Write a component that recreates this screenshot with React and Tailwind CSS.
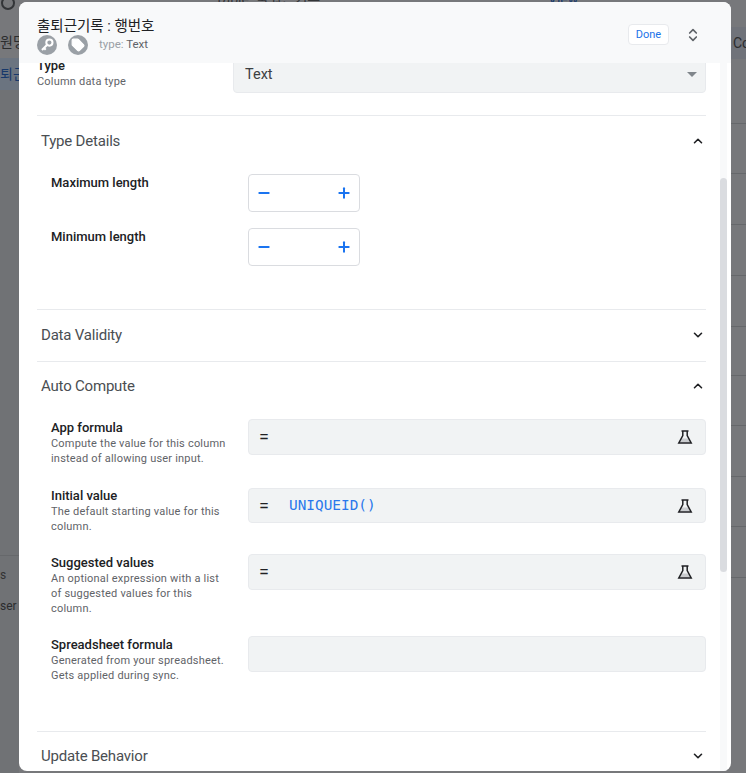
import React from 'react';
import { ChevronUp, ChevronDown, ChevronsUpDown, Minus, Plus, Tag } from 'lucide-react';

const sans = "font-['Roboto','Noto_Sans_CJK_KR',sans-serif]";
const bgLines = [123, 173, 224, 275, 326, 375, 425, 476, 526, 577];

const KeyIcon = () => (
  <svg width="14" height="14" viewBox="0 0 14 14" fill="none">
    <circle cx="9.4" cy="4.6" r="3.1" stroke="white" strokeWidth="2" />
    <path d="M7.2 6.8 2 12M4 10l1.7 1.7" stroke="white" strokeWidth="2.1" />
  </svg>
);

const Flask = () => (
  <svg width="16" height="16" viewBox="0 0 16 16" fill="none" className="text-[#202124]">
    <path d="M4.2 9.5h7.6l2 4H2.2z" fill="#c9cbce" />
    <path d="M4.5 2h7M5.8 2v4.6L1.8 14h12.4l-4-7.4V2" stroke="currentColor" strokeWidth="1.5" />
  </svg>
);

const SectionHeader = ({ title, open }) => (
  <div className="flex items-center justify-between pl-1 pr-px">
    <span className="text-[15px] tracking-[-0.2px] leading-5 text-[#4a4e52]">{title}</span>
    {open ? <ChevronUp size={14} strokeWidth={2.75} className="text-[#202124]" /> : <ChevronDown size={14} strokeWidth={2.75} className="text-[#202124]" />}
  </div>
);

const Stepper = () => (
  <div className="w-[112px] h-[38px] rounded border border-[#dadce0] flex items-center justify-between px-[7px] text-[#1b74f0]">
    <Minus size={16} strokeWidth={3} />
    <Plus size={16} strokeWidth={3} />
  </div>
);

const Label = ({ children }) => (
  <div className="text-[13px] leading-4 font-medium text-[#202124]">{children}</div>
);

const FormulaRow = ({ label, lines, value, h = 'h-[68px]', box = 'h-[36px] -mt-px' }) => (
  <div className={`flex ${h}`}>
    <div className="w-[197px] shrink-0">
      <Label>{label}</Label>
      {lines.map((l) => (
        <div key={l} className="text-[11px] leading-[15px] text-[#5f6368] tracking-[0.2px]">{l}</div>
      ))}
    </div>
    <div className={`flex-1 ${box} bg-[#f1f3f4] rounded border border-[#e8eaed] flex items-center pl-[10px] pr-[12px]`}>
      <span className="w-[30px] text-[18px] leading-none text-[#202124]">=</span>
      <span className="flex-1 font-['DejaVu_Sans_Mono',monospace] text-[14.4px] text-[#2a78ec]">{value}</span>
      <Flask />
    </div>
  </div>
);

export default function App() {
  return (
    <div className={`relative w-[746px] h-[773px] overflow-hidden bg-[#77787b] ${sans}`}>
      {/* dimmed page behind the dialog */}
      <div className="absolute left-0 top-[58px] w-[19px] h-[32px] bg-[#6b7480]" />
      <div className="absolute left-0 top-[90px] w-[19px] h-[683px] bg-[#707275]" />
      <div className="absolute left-[731px] top-[27px] w-[15px] h-[32px] bg-[#70737a]" />
      <div className="absolute left-px -top-[4px] w-[14px] h-[14px] rounded-full border-2 border-[#333538]" />
      <span className="absolute left-[215px] -top-[11px] text-sm text-[#333538]">Table: 출퇴근기록</span>
      <span className="absolute left-[548px] -top-[11px] text-sm text-[#17386b]">View</span>
      <span className="absolute left-0 top-[32px] text-sm text-[#2b2c2e]">원명</span>
      <span className="absolute left-0 top-[64px] text-sm text-[#17386b]">퇴근</span>
      <div className="absolute left-0 top-[555px] w-[19px] h-px bg-[#66686b]" />
      <span className="absolute left-0 top-[567px] text-xs text-[#333]">s</span>
      <span className="absolute left-0 top-[598px] text-xs text-[#2b2c2e]">ser s</span>
      <span className="absolute left-[733px] top-[33px] text-sm text-[#2b2c2e]">Co</span>
      {bgLines.map((y) => (
        <div key={y} className="absolute left-[731px] w-[15px] h-px bg-[#66686b]" style={{ top: y }} />
      ))}

      {/* dialog */}
      <div className="absolute left-[19px] top-[2px] w-[712px] h-[769px] bg-white rounded-lg overflow-hidden flex flex-col">
        <div className="h-[61px] shrink-0 bg-[#f8f9fa] flex items-start justify-between pl-[18px] pr-[30px] z-10">
          <div className="pt-[15px]">
            <div className="text-[14.5px] leading-[20px] text-[#202124]">출퇴근기록 : 행번호</div>
            <div className="flex items-center -mt-[2px]">
              <span className="w-5 h-5 rounded-full bg-[#9aa0a6] flex items-center justify-center"><KeyIcon /></span>
              <span className="ml-[11px] w-5 h-5 rounded-full bg-[#9aa0a6] flex items-center justify-center text-white"><Tag size={14} strokeWidth={2} fill="white" className="text-white" /></span>
              <span className="ml-[11px] text-[11.5px] text-[#9aa0a6]">type: <span className="text-[#5f6368]">Text</span></span>
            </div>
          </div>
          <div className="flex items-center pt-[22px]">
            <button className="h-[21px] w-[41px] bg-white rounded border border-[#e8eaed] text-[11px] leading-none text-[#1a73e8]">Done</button>
            <ChevronsUpDown size={16} strokeWidth={2.5} className="ml-[16px] text-[#5f6368]" />
          </div>
        </div>

        <div className="flex flex-1 min-h-0">
          <div className="flex-1 overflow-hidden pl-[18px] pr-[14px]">
            {/* Type row, cut by the header */}
            <div className="flex -mt-[8px] h-[60px] border-b border-[#e8eaed] box-content">
              <div className="w-[196px] shrink-0 pt-[3px]">
                <Label>Type</Label>
                <div className="text-[11px] leading-[15px] text-[#5f6368] tracking-[0.2px]">Column data type</div>
              </div>
              <div className="flex-1 h-[38px] bg-[#f1f3f4] rounded border border-[#e8eaed] flex items-center justify-between pl-[11px] pr-2">
                <span className="text-[14.5px] pt-0.5 text-[#3c4043]">Text</span>
                <span className="w-0 h-0 border-x-[5px] border-x-transparent border-t-[5px] border-t-[#80868b]" />
              </div>
            </div>

            <div className="pt-[15px] h-[194px] border-b border-[#e8eaed]">
              <SectionHeader title="Type Details" open />
              <div className="pl-[14px] pt-[23px]">
                <div className="flex h-[54px]">
                  <div className="w-[197px] pt-px"><Label>Maximum length</Label></div>
                  <Stepper />
                </div>
                <div className="flex">
                  <div className="w-[197px] pt-px"><Label>Minimum length</Label></div>
                  <Stepper />
                </div>
              </div>
            </div>

            <div className="h-[52px] pb-0.5 border-b border-[#e8eaed] flex flex-col justify-center">
              <SectionHeader title="Data Validity" />
            </div>

            <div className="pt-[14px] h-[370px] border-b border-[#e8eaed]">
              <SectionHeader title="Auto Compute" open />
              <div className="pl-[14px] pt-[24px]">
                <FormulaRow label="App formula" lines={['Compute the value for this column', 'instead of allowing user input.']} />
                <FormulaRow label="Initial value" lines={['The default starting value for this', 'column.']} value="UNIQUEID()" h="h-[67px]" box="h-[35px]" />
                <FormulaRow label="Suggested values" lines={['An optional expression with a list', 'of suggested values for this', 'column.']} h="h-[82px]" />
                <div className="flex">
                  <div className="w-[197px] shrink-0">
                    <Label>Spreadsheet formula</Label>
                    <div className="text-[11px] leading-[15px] text-[#5f6368] tracking-[0.2px]">Generated from your spreadsheet.</div>
                    <div className="text-[11px] leading-[15px] text-[#5f6368] tracking-[0.2px]">Gets applied during sync.</div>
                  </div>
                  <div className="flex-1 h-[36px] -mt-px bg-[#f1f3f4] rounded border border-[#e8eaed]" />
                </div>
              </div>
            </div>

            <div className="pt-[14px]">
              <SectionHeader title="Update Behavior" />
            </div>
          </div>

          {/* scrollbar */}
          <div className="w-[7px] mr-[4px] bg-[#f8f9fa]">
            <div className="mt-[115px] h-[394px] bg-[#dadce0] rounded" />
          </div>
        </div>
      </div>
    </div>
  );
}
